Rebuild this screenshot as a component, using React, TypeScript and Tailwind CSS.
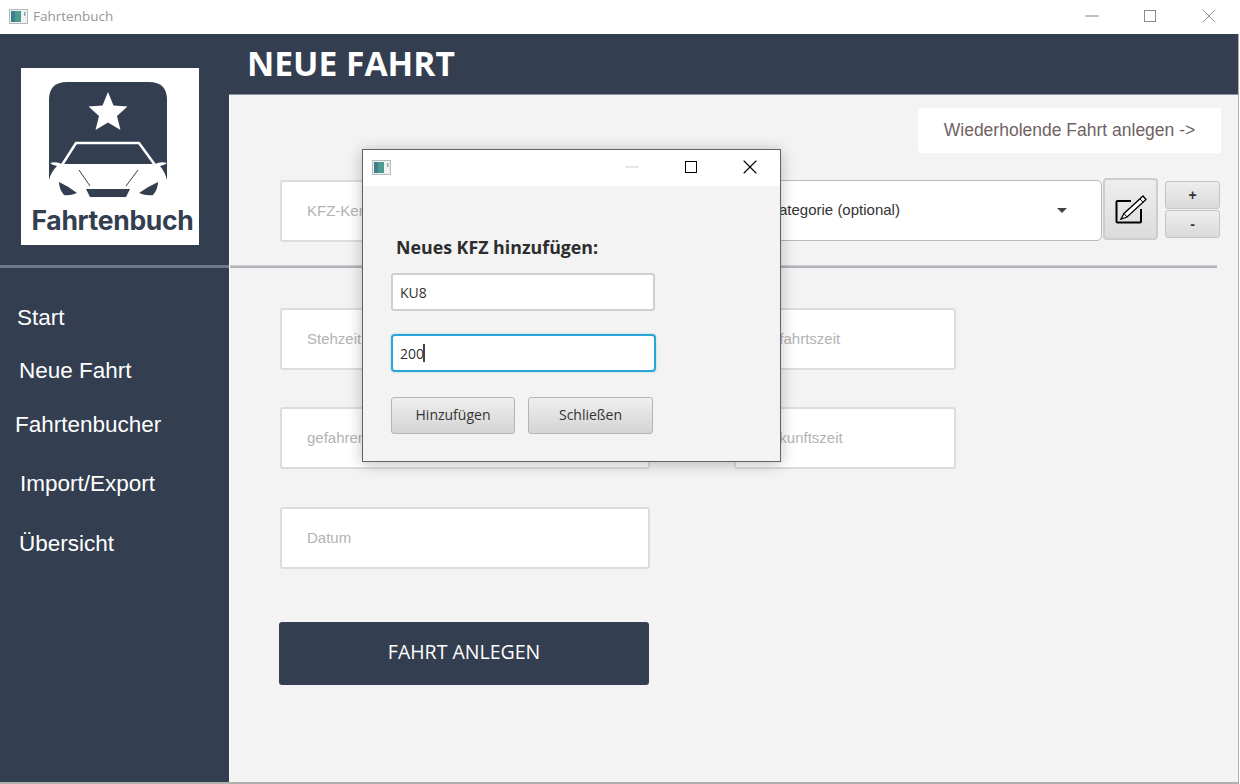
import { Minus, X } from "lucide-react";

const arial = "font-['Liberation_Sans',Arial,sans-serif]";
const segoe = "font-['Open_Sans','Noto_Sans',sans-serif]";

const navItems = [
  { label: "Start", className: "ml-[17px] mt-[36px]" },
  { label: "Neue Fahrt", className: "ml-[19px] mt-[25px]" },
  { label: "Fahrtenbucher", className: "ml-[15px] mt-[26px]" },
  { label: "Import/Export", className: "ml-[20px] mt-[31px]" },
  { label: "Übersicht", className: "ml-[19px] mt-[32px]" },
];

const WindowIcon = () => (
  <svg width="19" height="15" viewBox="0 0 19 15">
    <rect x="0.5" y="0.5" width="18" height="14" fill="#eef1f1" stroke="#b4babc" />
    <rect x="2" y="2" width="10" height="11" fill="#4f9a90" />
    <rect x="2" y="2" width="4" height="11" fill="#3f7f8c" />
    <rect x="15" y="3" width="1.500" height="4" fill="#8fa8a8" />
  </svg>
);

const Logo = () => (
  <svg width="120" height="118" viewBox="49 82 120 118" className="ml-[28px]">
    <path d="M67 82H149Q167 82 167 100V182L49 182V100Q49 82 67 82Z" fill="#333e50" />
    <path d="M108 92L113.500 105.500L127.500 106.500L117 116L120.500 130L108 122.500L95.500 130L99 116L88.500 106.500L102.500 105.500Z" fill="#fff" />
    <path d="M62 165L76 143H139L155 165" fill="none" stroke="#fff" strokeWidth="2.500" />
    <path d="M50 163Q56 161 62 164L155 164Q161 161 167 163Q165 165 160 166Q165 172 167 180V199H49V180Q51 172 57 166Q52 165 50 163Z" fill="#fff" />
    <path d="M59 182Q68 186 77 193Q70 196 64 195Q59 189 59 182Z" fill="#333e50" />
    <path d="M158 182Q149 186 139 193Q146 196 153 195Q158 189 158 182Z" fill="#333e50" />
    <path d="M86 189H130L126 197H90Z" fill="#333e50" />
    <path d="M79 170L90 186" stroke="#333e50" strokeWidth="1" />
    <path d="M138 170L126 186" stroke="#333e50" strokeWidth="1" />
  </svg>
);

const Field = ({ text, width }: { text: string; width: string }) => (
  <div className={`${width} h-[62px] shrink-0 rounded-[3px] border-2 border-[#dcdcdc] bg-white pl-[25px] flex items-center text-[15px] text-[#b3b3b3] ${arial}`}>
    {text}
  </div>
);

const EditIcon = () => (
  <svg width="34" height="31" viewBox="0 0 34 31" fill="none" stroke="#000">
    <path d="M17 7H3.500Q2.500 7 2.500 8V27.500Q2.500 28.500 3.500 28.500H26Q27 28.500 27 27.500V15" strokeWidth="2" />
    <path d="M29 2L32 5.500L13 23L7 25L10 19.500Z" fill="#fff" strokeWidth="1.300" />
    <path d="M26 5L29.500 8.500M10 19.500L13 23" strokeWidth="1" />
  </svg>
);

const DialogButton = ({ text, width }: { text: string; width: string }) => (
  <div className={`${width} h-[37px] pb-[2px] rounded-[3px] border border-[#b5b5b5] bg-gradient-to-b from-[#efefef] to-[#d4d4d4] flex items-center justify-center text-[14px] text-[#333333] ${segoe}`}>
    {text}
  </div>
);

const SmallButton = ({ text }: { text: string }) => (
  <div className="w-[55px] h-[28px] rounded-[3px] border border-[#c4c4c4] bg-gradient-to-b from-[#eeeeee] to-[#dadada] flex items-center justify-center text-[14px] font-bold text-[#333333] font-['Liberation_Sans',sans-serif]">
    {text}
  </div>
);

export default function App() {
  return (
    <div className="relative w-[1240px] h-[784px] overflow-hidden bg-white flex flex-col">
      <div className="h-[34px] shrink-0 bg-white flex items-center pl-[9px] pb-[2px]">
        <WindowIcon />
        <span className={`ml-[5px] text-[13.500px] text-[#969696] ${segoe}`}>Fahrtenbuch</span>
        <div className="ml-auto mr-[19px] flex items-center text-[#777777]">
          <div className="w-[24px] mr-[34px] flex justify-center"><Minus size={22} strokeWidth={1} /></div>
          <div className="w-[24px] mr-[35px] flex justify-center"><div className="w-[12px] h-[12px] border border-[#8a8a8a]" /></div>
          <div className="w-[24px] flex justify-center"><X size={24} strokeWidth={0.8} /></div>
        </div>
      </div>

      <div className="flex h-[750px] w-[1239px] border-b-2 border-r border-[#b0b0b0]">
        <aside className="w-[229px] shrink-0 bg-[#333e50] flex flex-col">
          <div className="ml-[21px] mt-[34px] w-[178px] h-[177px] bg-white pt-[14px]">
            <Logo />
            <div className="text-[26.500px] leading-[30px] font-bold text-[#333e50] text-center font-['Inter',sans-serif] tracking-[-0.3px] ml-[5px] mt-[5px] whitespace-nowrap">
              Fahrtenbuch
            </div>
          </div>
          <div className="mt-[20px] h-[3px] bg-[#6f7989]" />
          {navItems.map((item) => (
            <div key={item.label} className={`${item.className} text-[22.500px] leading-[28px] text-white ${arial}`}>
              {item.label}
            </div>
          ))}
        </aside>

        <main className="flex-1 flex flex-col">
          <header className="h-[61px] shrink-0 bg-[#333e50] border-b border-[#8a93a1] pl-[18px] pt-[7px]">
            <h1 className={`text-[33.600px] leading-[44px] font-bold text-white ${segoe}`}>NEUE FAHRT</h1>
          </header>

          <div className="flex-1 bg-[#f3f3f3] border-l border-[#fafafa] flex flex-col pl-[50px]">
            <div className="mt-[13px] ml-[638px] w-[303px] h-[45px] rounded-[3px] bg-white flex items-center justify-center">
              <span className={`text-[17.500px] text-[#6f6262] ${arial}`}>Wiederholende Fahrt anlegen -&gt;</span>
            </div>

            <div className="mt-[25px] flex items-start h-[64px]">
              <div className="mt-[2px]"><Field text="KFZ-Kennzeichen" width="w-[370px]" /></div>
              <div className="mt-[2px] ml-[84px] w-[368px] h-[61px] shrink-0 rounded-[5px] border border-[#b8b8b8] bg-white pl-[34px] pr-[34px] flex items-center justify-between">
                <span className={`text-[15px] text-[#333333] ${arial}`}>Kategorie (optional)</span>
                <span className="w-0 h-0 border-x-[5px] border-x-transparent border-t-[5px] border-t-[#444444]" />
              </div>
              <div className="ml-px w-[55px] h-[62px] shrink-0 rounded-[4px] border-2 border-[#cdcdcd] bg-gradient-to-b from-[#eeeeee] to-[#dcdcdc] flex items-center justify-center">
                <EditIcon />
              </div>
              <div className="mt-[3px] ml-[7px] flex flex-col gap-px">
                <SmallButton text="+" />
                <SmallButton text="-" />
              </div>
            </div>

            <div className="mt-[23px] ml-[-50px] mr-[21px] h-[3px] bg-gradient-to-b from-[#d0d0d4] to-[#a4a4ac]" />

            <div className="mt-[40px] flex">
              <Field text="Stehzeit (optional)" width="w-[370px]" />
              <div className="ml-[84px]"><Field text="Abfahrtszeit" width="w-[222px]" /></div>
            </div>
            <div className="mt-[37px] flex">
              <Field text="gefahrene Kilometer" width="w-[370px]" />
              <div className="ml-[84px]"><Field text="Ankunftszeit" width="w-[222px]" /></div>
            </div>
            <div className="mt-[38px]">
              <Field text="Datum" width="w-[370px]" />
            </div>

            <div className={`mt-[53px] ml-[-1px] w-[370px] h-[63px] pb-[3px] rounded-[3px] bg-[#333e50] flex items-center justify-center text-[19.500px] text-white ${segoe}`}>
              FAHRT ANLEGEN
            </div>
          </div>
        </main>
      </div>

      {/* dialog window over the page */}
      <div className="absolute left-[362px] top-[149px] w-[419px] h-[313px] border border-[#5f6368] bg-[#f3f3f3] shadow-[0_2px_14px_rgba(0,0,0,0.25)] flex flex-col">
        <div className="h-[36px] shrink-0 bg-white flex items-center pl-[9px] pr-[18px] pb-[2px]">
          <WindowIcon />
          <div className="ml-auto flex items-center">
            <div className="w-[24px] mr-[35px] flex justify-center"><Minus size={22} strokeWidth={0.8} className="text-[#b9b9b9]" /></div>
            <div className="w-[24px] mr-[35px] flex justify-center"><div className="w-[12px] h-[12px] border border-black" /></div>
            <div className="w-[24px] flex justify-center"><X size={24} strokeWidth={1.100} className="text-black" /></div>
          </div>
        </div>
        <div className="flex flex-col pl-[28px]">
          <div className={`mt-[49px] ml-[5px] text-[17.800px] leading-[24px] font-bold text-[#2d2d2d] ${segoe}`}>
            Neues KFZ hinzufügen:
          </div>
          <div className={`mt-[14px] w-[264px] h-[38px] rounded-[3px] border-2 border-[#d0d0d0] bg-white pl-[7px] flex items-center text-[14px] text-[#333333] ${segoe}`}>
            KU8
          </div>
          <div className={`mt-[23px] w-[265px] h-[38px] rounded-[4px] border-2 border-[#2aa5d6] bg-white pl-[7px] flex items-center text-[14px] text-[#333333] shadow-[0_0_2px_rgba(42,165,214,0.5)] ${segoe}`}>
            200
            <span className="ml-[-1px] w-[2px] h-[18px] bg-[#444444]" />
          </div>
          <div className="mt-[25px] flex gap-[13px]">
            <DialogButton text="Hinzufügen" width="w-[124px]" />
            <DialogButton text="Schließen" width="w-[125px]" />
          </div>
        </div>
      </div>
    </div>
  );
}
